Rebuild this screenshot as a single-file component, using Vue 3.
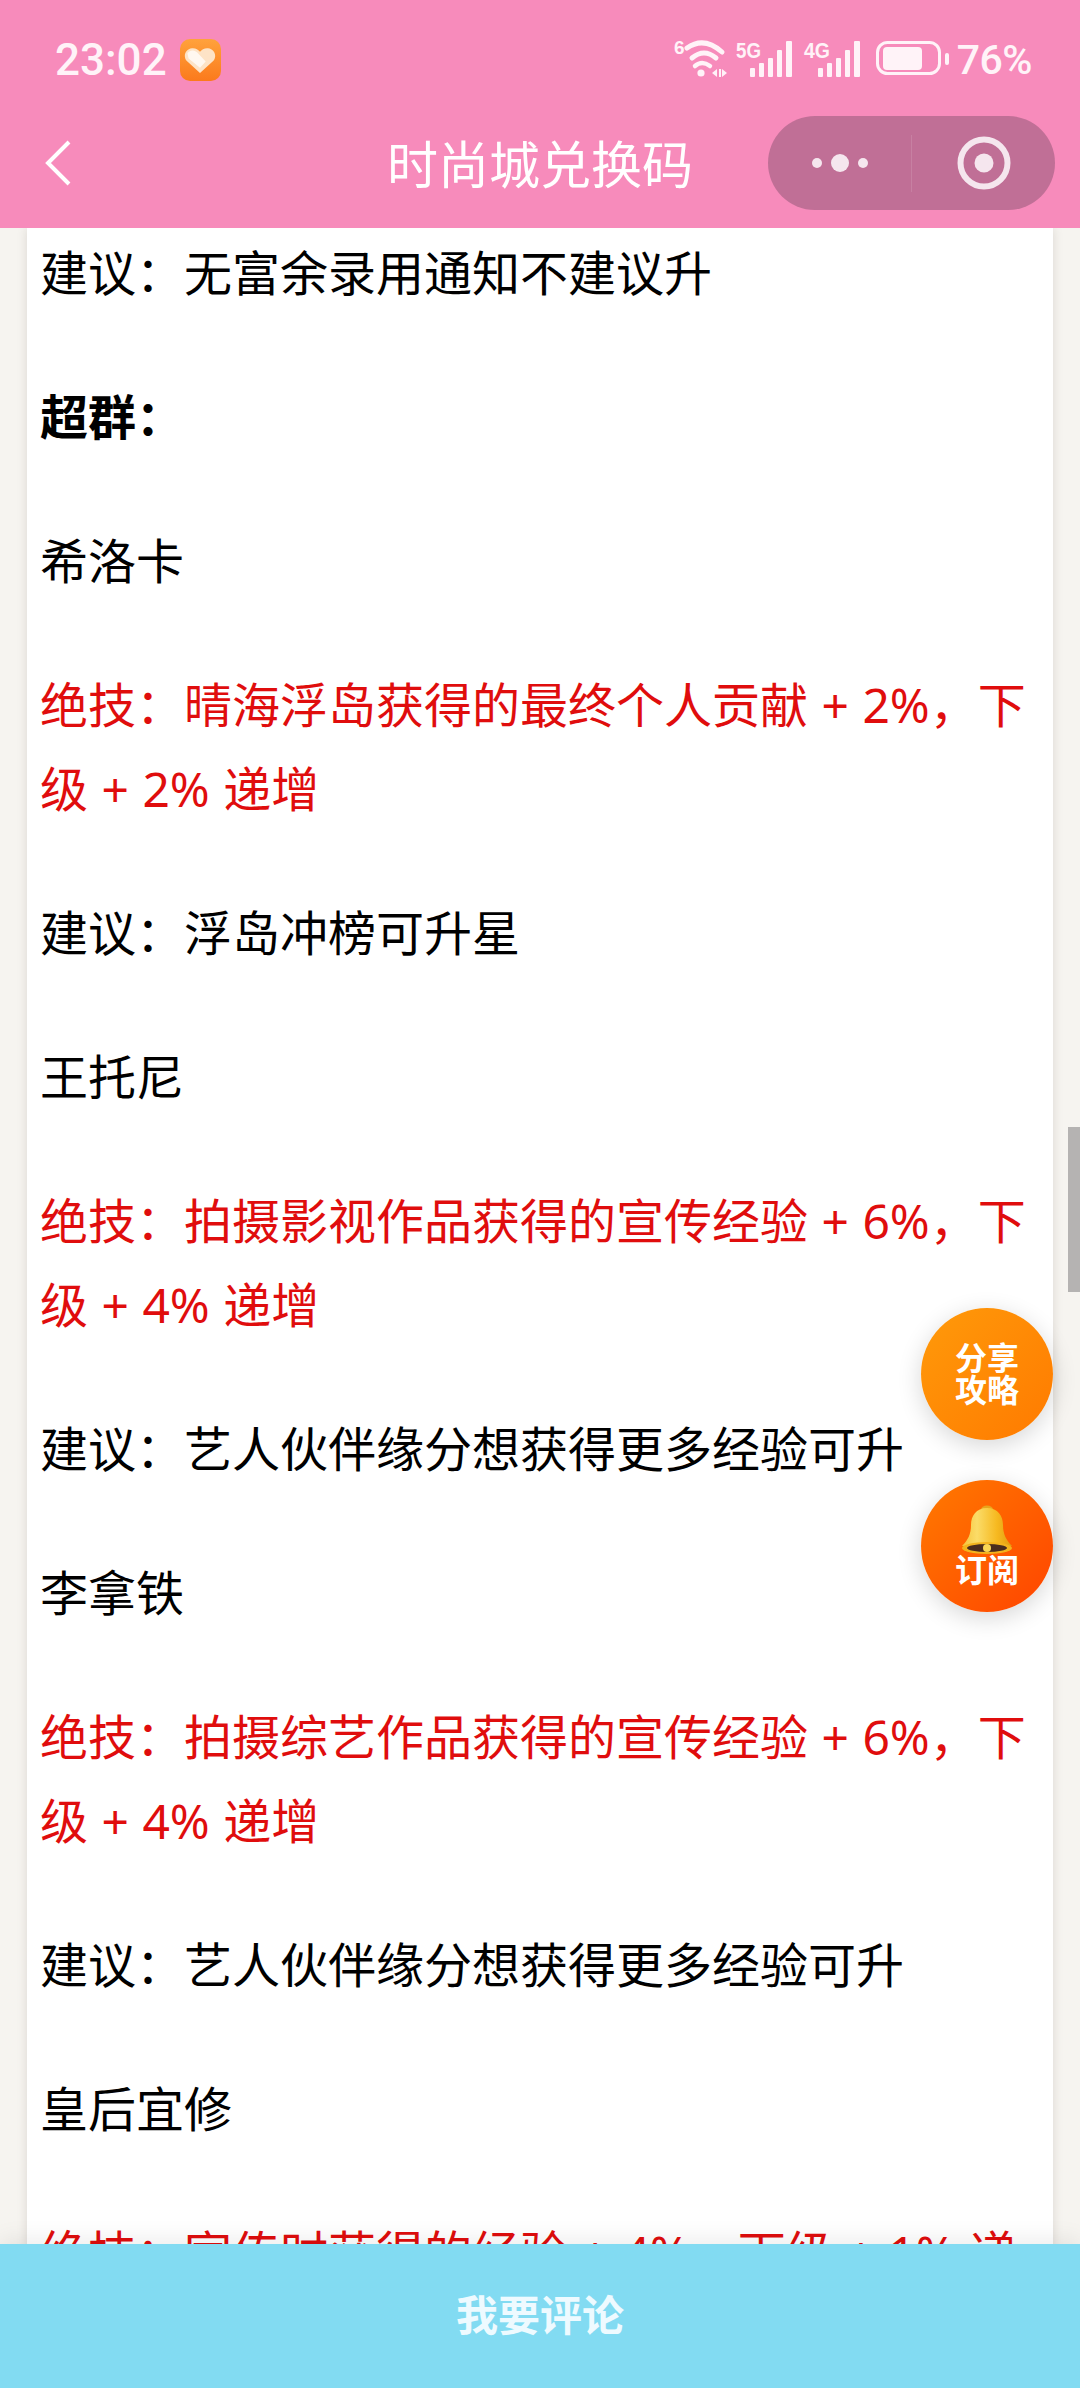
<template>
  <div class="page">
    <header class="top">
      <div class="status">
        <div class="status-left">
          <span class="time">23:02</span>
          <span class="app-badge">
            <svg width="32" height="27" viewBox="0 0 28 26" preserveAspectRatio="none">
              <path d="M14 25 L2.5 13.5 C-1 9.5 0.8 2 7 1.2 C10 0.9 12.5 2.4 14 4.6 C15.5 2.4 18 0.9 21 1.2 C27.2 2 29 9.5 25.5 13.5 Z" fill="#fde3c6" />
              <path d="M3 6 C6 2 10 3 13 7 L19 14 L14 20 L4 11 Z" fill="#fff8f0" />
            </svg>
          </span>
        </div>
        <div class="status-right">
          <svg class="signal-icons" width="202" height="42" viewBox="0 0 202 42">
            <text x="0" y="15" class="net-small">6</text>
            <g fill="none" stroke="#fff3f8" stroke-linecap="round">
              <path d="M13 9 Q30 -3 48 13" stroke-width="5" />
              <path d="M18 19 Q30 9 42 19" stroke-width="5" />
              <path d="M21 27 Q28 21 36 27" stroke-width="4.5" />
            </g>
            <g fill="#fff3f8">
              <circle cx="27" cy="34" r="3.6" />
              <path d="M38 34 L43 30 V38 Z" />
              <path d="M45 30 H47 V38 H45 Z" />
              <path d="M48 30 L53 34 L48 38 Z" />
            </g>
            <text x="62" y="19" class="net" textLength="25" lengthAdjust="spacingAndGlyphs">5G</text>
            <g fill="#fff3f8">
              <rect x="76" y="29" width="5" height="9" rx="1" />
              <rect x="85" y="24" width="5" height="14" rx="1" />
              <rect x="94" y="19" width="5" height="19" rx="1" />
              <rect x="103" y="11" width="5" height="27" rx="1" />
              <rect x="112" y="2" width="6" height="36" rx="1" />
            </g>
            <text x="130" y="19" class="net" textLength="26" lengthAdjust="spacingAndGlyphs">4G</text>
            <g fill="#fff3f8">
              <rect x="144" y="29" width="5" height="9" rx="1" />
              <rect x="153" y="24" width="5" height="14" rx="1" />
              <rect x="162" y="19" width="5" height="19" rx="1" />
              <rect x="171" y="11" width="5" height="27" rx="1" />
              <rect x="180" y="2" width="6" height="36" rx="1" />
            </g>
          </svg>
          <svg class="battery" width="76" height="38" viewBox="0 0 76 38">
            <rect x="1.5" y="1.5" width="62" height="31" rx="10" fill="none" stroke="#fff3f8" stroke-width="3" />
            <rect x="7" y="6" width="39" height="23" rx="4" fill="#fff3f8" />
            <rect x="69" y="12" width="4" height="12" rx="2" fill="#fff3f8" />
          </svg>
          <span class="percent">76%</span>
        </div>
      </div>
      <nav class="nav">
        <svg class="back" width="28" height="46" viewBox="0 0 28 46">
          <path d="M25 2 L4 23 L25 44" fill="none" stroke="#fff" stroke-width="4" />
        </svg>
        <h1 class="title">时尚城兑换码</h1>
        <div class="capsule">
          <div class="capsule-part">
            <svg width="60" height="20" viewBox="0 0 60 20">
              <circle cx="7" cy="10" r="5" fill="#f5e6ee" />
              <circle cx="30" cy="10" r="9" fill="#f5e6ee" />
              <circle cx="53" cy="10" r="5" fill="#f5e6ee" />
            </svg>
          </div>
          <div class="capsule-line"></div>
          <div class="capsule-part">
            <svg width="54" height="54" viewBox="0 0 54 54">
              <circle cx="27" cy="27" r="23.5" fill="none" stroke="#f5e6ee" stroke-width="6" />
              <circle cx="27" cy="27" r="9.5" fill="#f5e6ee" />
            </svg>
          </div>
        </div>
      </nav>
    </header>

    <main class="scroll">
      <article class="card">
        <p
          v-for="(item, i) in paragraphs"
          :key="i"
          :class="{ red: item.type === 'red', strong: item.type === 'strong' }"
        >{{ item.text }}</p>
      </article>
      <div class="scrollbar"></div>
    </main>

    <footer class="comment">我要评论</footer>

    <button class="fab fab-share"><span>分享<br />攻略</span></button>
    <button class="fab fab-sub">
      <svg width="54" height="50" viewBox="0 0 54 50">
        <defs>
          <linearGradient id="bellBody" x1="0" y1="0" x2="1" y2="0">
            <stop offset="0" stop-color="#f6c33a" />
            <stop offset="0.3" stop-color="#fbdc68" />
            <stop offset="0.7" stop-color="#f6b920" />
            <stop offset="1" stop-color="#e29a10" />
          </linearGradient>
        </defs>
        <ellipse cx="27" cy="4.5" rx="6" ry="4" fill="#e9a51c" />
        <path d="M27 3 C16 3 11 11 11 20 C11 29 8 35 2 41 H52 C46 35 43 29 43 20 C43 11 38 3 27 3 Z" fill="url(#bellBody)" />
        <ellipse cx="27" cy="43" rx="25" ry="6" fill="#f3b31d" />
        <ellipse cx="27" cy="43" rx="20" ry="4" fill="#4a2c1e" />
        <circle cx="27" cy="43" r="4" fill="#f8d655" />
      </svg>
      <span class="sub-label">订阅</span>
    </button>
  </div>
</template>

<script setup>
const paragraphs = [
  { text: '建议：无富余录用通知不建议升' },
  { text: '超群：', type: 'strong' },
  { text: '希洛卡' },
  { text: '绝技：晴海浮岛获得的最终个人贡献 + 2%，下级 + 2% 递增', type: 'red' },
  { text: '建议：浮岛冲榜可升星' },
  { text: '王托尼' },
  { text: '绝技：拍摄影视作品获得的宣传经验 + 6%，下级 + 4% 递增', type: 'red' },
  { text: '建议：艺人伙伴缘分想获得更多经验可升' },
  { text: '李拿铁' },
  { text: '绝技：拍摄综艺作品获得的宣传经验 + 6%，下级 + 4% 递增', type: 'red' },
  { text: '建议：艺人伙伴缘分想获得更多经验可升' },
  { text: '皇后宜修' },
  { text: '绝技：宣传时获得的经验 + 4%，下级 + 1% 递增', type: 'red' }
]
</script>

<style>
html,
body {
  margin: 0;
  background: #f6f4f0;
}
</style>

<style scoped>
.page {
  position: relative;
  display: flex;
  flex-direction: column;
  width: 1080px;
  height: 2388px;
  overflow: hidden;
  font-family: Roboto, "Noto Sans CJK SC", sans-serif;
  background: #f6f4f0;
}

.top {
  flex: none;
  height: 228px;
  background: #f78bbb;
  color: #fff;
}

.status {
  display: flex;
  justify-content: space-between;
  align-items: center;
  height: 116px;
  padding: 4px 48px 0 55px;
  box-sizing: border-box;
}

.status-left,
.status-right {
  display: flex;
  align-items: center;
}

.time {
  font-size: 44px;
  font-weight: 500;
  color: #fff3f8;
}

.app-badge {
  display: flex;
  align-items: center;
  justify-content: center;
  width: 41px;
  height: 42px;
  margin-left: 13px;
  border-radius: 10px;
  background: linear-gradient(180deg, #ffa23c, #fb7a1c);
}

.signal-icons {
  overflow: visible;
}

.net {
  font-family: "Liberation Sans", sans-serif;
  font-size: 22px;
  font-weight: 700;
  fill: #fff3f8;
}

.net-small {
  font-family: "Liberation Sans", sans-serif;
  font-size: 19px;
  font-weight: 700;
  fill: #fff3f8;
}

.percent {
  margin-left: 5px;
  font-size: 41px;
  font-weight: 500;
  letter-spacing: -0.5px;
  color: #fff3f8;
}

.nav {
  position: relative;
  display: flex;
  align-items: center;
  justify-content: space-between;
  height: 94px;
  padding: 0 25px 0 44px;
}

.title {
  position: absolute;
  left: 0;
  right: 0;
  margin: -3px 0 0;
  text-align: center;
  font-size: 51px;
  font-weight: 400;
  color: #fff;
}

.capsule {
  display: flex;
  align-items: center;
  width: 287px;
  height: 94px;
  border-radius: 47px;
  background: #c06f96;
}

.capsule-part {
  flex: 1;
  display: flex;
  align-items: center;
  justify-content: center;
}

.capsule-line {
  width: 1px;
  height: 57px;
  background: rgba(255, 255, 255, 0.12);
}

.scroll {
  position: relative;
  flex: 1;
  min-height: 0;
  overflow: hidden;
}

.card {
  width: 1026px;
  margin-left: 27px;
  padding: 3px 13px 0;
  box-sizing: border-box;
  min-height: 100%;
  background: #fff;
  font-family: "Noto Sans", "Noto Sans CJK SC", sans-serif;
  box-shadow: 0 0 10px rgba(60, 40, 30, 0.14);
}

.card p {
  margin: 0 0 60px;
  font-size: 48px;
  line-height: 84px;
  word-spacing: 1px;
  color: #000;
}

.card p.red {
  color: #e00d0d;
}

.card p.strong {
  font-weight: 700;
}

.scrollbar {
  position: absolute;
  right: 0;
  top: 899px;
  width: 12px;
  height: 165px;
  background: #b5b3b2;
}

.comment {
  flex: none;
  position: relative;
  height: 144px;
  line-height: 146px;
  text-align: center;
  font-size: 42px;
  font-weight: 700;
  color: #eefaff;
  background: #82dbf2;
  box-shadow: 0 -4px 22px rgba(0, 0, 0, 0.08);
}

.fab {
  position: absolute;
  left: 921px;
  display: flex;
  flex-direction: column;
  align-items: center;
  justify-content: center;
  width: 132px;
  height: 132px;
  padding: 0;
  border: none;
  border-radius: 50%;
  font-family: inherit;
  font-size: 32px;
  font-weight: 700;
  line-height: 32px;
  color: #fff;
  box-shadow: 0 6px 24px rgba(0, 0, 0, 0.16);
}

.fab-share {
  top: 1308px;
  padding-top: 2px;
  background: linear-gradient(135deg, #ff9a0a, #ff7a00);
}

.fab-sub {
  top: 1480px;
  justify-content: flex-start;
  padding-top: 25px;
  background: linear-gradient(135deg, #ff7a00, #ff4400);
}
</style>
